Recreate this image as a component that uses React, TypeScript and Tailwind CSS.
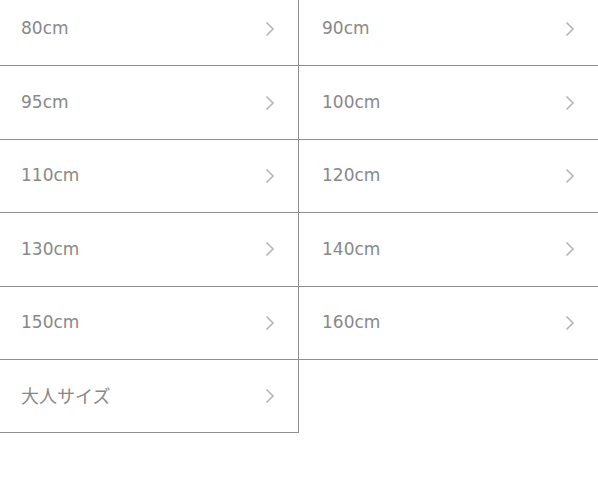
const SIZES = ["80cm", "90cm", "95cm", "100cm", "110cm", "120cm", "130cm", "140cm", "150cm", "160cm", "大人サイズ"]

function Chevron() {
  return (
    <svg width="10" height="16" viewBox="0 0 10 16" fill="none" className="shrink-0">
      <path d="M1.5 1.5 L8 8 L1.5 14.5" stroke="#b5b5b5" strokeWidth="1.6" />
    </svg>
  )
}

export default function App() {
  return (
    <div className="w-[598px] h-[503px] overflow-hidden bg-white">
      <ul
        className="grid grid-cols-2 -mt-[7px]"
        style={{ fontFamily: '"DejaVu Sans", "Noto Sans CJK JP", sans-serif' }}
      >
        {SIZES.map((s, i) => (
          <li
            key={s}
            className={`h-[73.4px] flex items-center justify-between pr-[23px] border-b border-[#8f8f8f] ${
              i % 2 === 0 ? "border-r pl-[21px]" : "pl-[23px]"
            }`}
          >
            <span className={`${s.endsWith("cm") ? "text-[17px]" : "text-[18px]"} text-[#888]`}>{s}</span>
            <Chevron />
          </li>
        ))}
      </ul>
    </div>
  )
}
